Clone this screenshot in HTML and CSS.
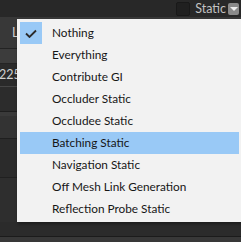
FILE: index.html
```html
<!DOCTYPE html>
<html lang="en">
<head>
    <meta charset="UTF-8">
    <title>Static Flags</title>
    <link rel="stylesheet" href="styles.css">
</head>
<body>
    <div class="inspector">
        <div class="topbar">
            <span class="toggle"></span>
            <span class="static-label">Static</span>
            <span class="arrow-box"><svg width="8" height="6" viewBox="0 0 8 6"><path d="M0 1 L8 1 L4 5 Z" fill="#eee"/></svg></span>
        </div>
        <div class="row row-layer"><span class="cut">L</span></div>
        <div class="row row-gap"></div>
        <div class="row row-field"><span class="cut num">225</span></div>
        <div class="row row-dark"></div>
        <div class="row row-band"></div>
        <div class="row row-mid"></div>
        <div class="row row-dark2"></div>
        <div class="row row-low"></div>
        <div class="row row-foot"></div>
    </div>

    <div class="menu">
        <div class="item checked"><span class="check"><svg width="12" height="9" viewBox="0 0 12 9"><path d="M1 4.5 L4.5 8 L11 1.5" fill="none" stroke="#2b2b2b" stroke-width="1.8"/></svg></span>Nothing</div>
        <div class="item">Everything</div>
        <div class="item">Contribute GI</div>
        <div class="item">Occluder Static</div>
        <div class="item">Occludee Static</div>
        <div class="item hover">Batching Static</div>
        <div class="item">Navigation Static</div>
        <div class="item">Off Mesh Link Generation</div>
        <div class="item">Reflection Probe Static</div>
    </div>
</body>
</html>
```

FILE: styles.css
```css
body {
    margin: 0;
    background: #383838;
    font-family: Lato, "Open Sans", sans-serif;
    overflow: hidden;
}
.inspector {
    width: 241px;
    height: 242px;
}
.topbar {
    height: 17px;
    background: #282828;
    display: flex;
    align-items: center;
    justify-content: flex-end;
    padding-right: 2px;
}
.toggle {
    width: 12px;
    height: 12px;
    background: #202020;
    border: 1px solid #191919;
    border-radius: 2px;
    margin-right: 5px;
}
.static-label {
    color: #c2c2c2;
    font-size: 12.5px;
    margin-right: 2px;
}
.arrow-box {
    width: 11px;
    height: 12px;
    background: #8a8a8a;
    border-radius: 2px;
    display: flex;
    align-items: center;
    justify-content: center;
}
.row {
    width: 17px;
}
.cut {
    display: block;
    font-size: 12.5px;
    color: #d0d0d0;
}
.row-layer {
    height: 31px;
    background: #383838;
    border-bottom: 1px solid #232323;
}
.row-layer .cut {
    padding-left: 12px;
    line-height: 31px;
}
.row-gap {
    height: 14px;
    background: #3c3c3c;
    border-bottom: 1px solid #242424;
}
.row-field {
    height: 22px;
    background: #2a2a2a;
    border-bottom: 1px solid #464646;
}
.row-field .num {
    line-height: 22px;
    margin-left: -1px;
}
.row-dark {
    height: 24px;
    background: #2c2c2c;
    border-bottom: 1px solid #1e1e1e;
}
.row-band {
    height: 4px;
    background: #3a3a3a;
}
.row-mid {
    height: 22px;
    background: #333333;
    border-bottom: 1px solid #1f1f1f;
}
.row-dark2 {
    height: 38px;
    background: #2b2b2b;
    border-bottom: 1px solid #202020;
}
.row-low {
    height: 44px;
    background: #2e2e2e;
}
.row-foot {
    width: 241px;
    height: 14px;
    background: #2b2b2b;
    border-bottom: 1px solid #1b1b1b;
}
.menu {
    position: absolute;
    left: 17px;
    top: 19px;
    width: 219px;
    padding: 3px 2px 2px 3px;
    background: #f2f2f2;
    border-right: 1px solid #d8d8d8;
    box-shadow: 1px 2px 3px rgba(0, 0, 0, 0.35);
}
.item {
    height: 22px;
    line-height: 22px;
    font-size: 11.8px;
    color: #161616;
    padding-left: 32px;
    position: relative;
    white-space: nowrap;
}
.item.hover {
    background: #99c9f6;
}
.check {
    position: absolute;
    left: 0;
    top: 0;
    width: 22px;
    height: 22px;
    background: #99c9f6;
    display: flex;
    align-items: center;
    justify-content: center;
}
```
